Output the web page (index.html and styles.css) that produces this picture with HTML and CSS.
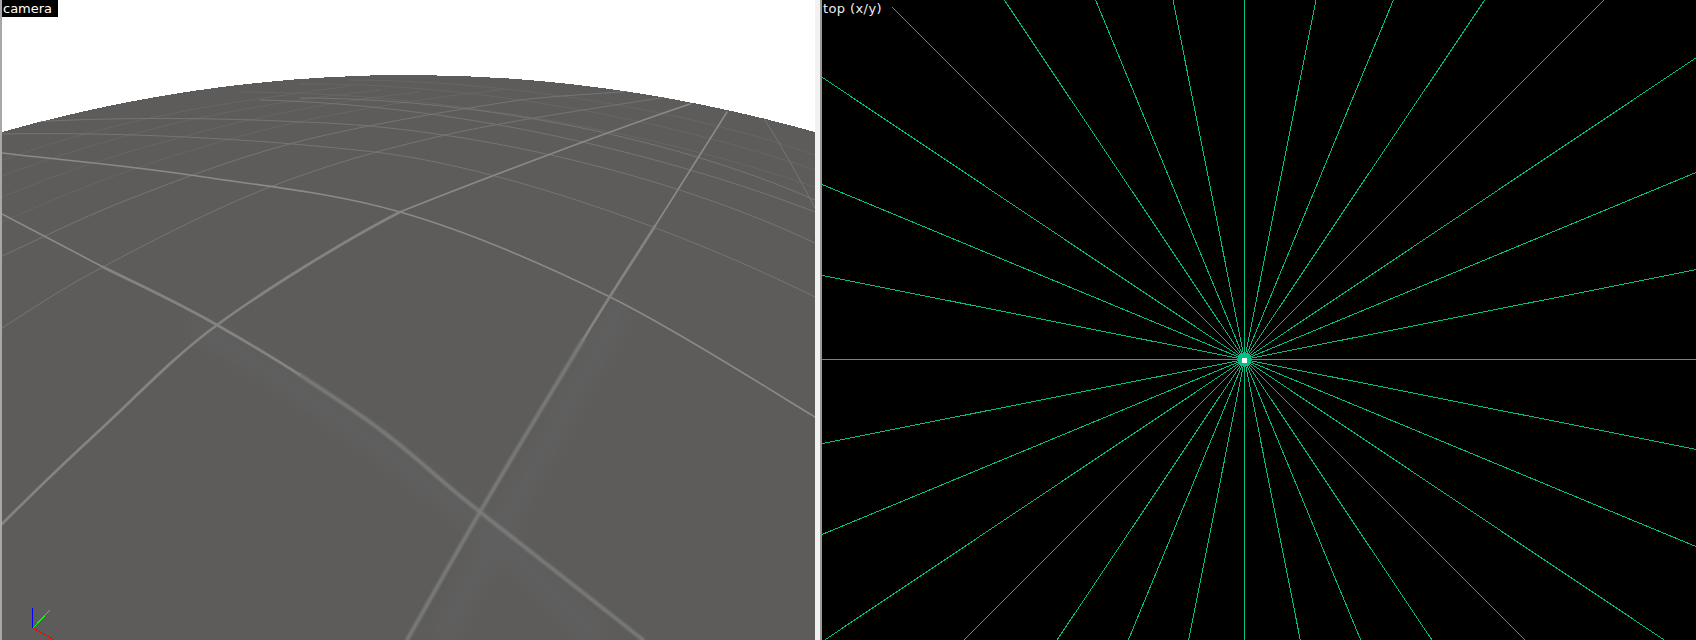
FILE: index.html
```html
<!DOCTYPE html>
<html>
<head>
<meta charset="utf-8">
<title>Viewports</title>
<link rel="stylesheet" href="styles.css">
</head>
<body>
<div class="views">
    <div class="view view-camera">
        <svg class="scene" viewBox="2 0 813 640" width="813" height="640">
            <defs>
                <clipPath id="ground-clip">
                    <path d="M2 132 Q408 18 815 132 L815 640 L2 640 Z"/>
                </clipPath>
            </defs>
            <!-- ground -->
            <path class="ground" d="M2 132 Q408 18 815 132 L815 640 L2 640 Z"/>

            <g clip-path="url(#ground-clip)">
                <!-- soft blue glow next to the near lines -->
                <g class="glow">
                    <path d="M190 325 C280 370 400 460 500 540 L600 640"/>
                    <path d="M440 640 C500 530 560 420 625 300"/>
                </g>

                <!-- far lines -->
                <g class="ln ln-faint">
                    <path d="M2 176 Q80 146 180 122 Q280 100 380 90"/>
                    <path d="M2 160 Q90 128 200 108 Q280 95 350 86"/>
                    <path d="M300 84 C470 82 670 120 815 170"/>
                    <path d="M350 80 C500 80 690 110 815 155"/>
                    <path d="M240 92 C430 92 650 130 815 187"/>
                    <path d="M2 197 Q90 160 183 137 Q290 106 420 92"/>
                    <path d="M2 222 Q110 172 233 138 Q350 106 500 90"/>
                </g>
                <g class="ln ln-thin">
                    <path d="M2 328 C19 318 58 290 103 267 C148 243 213 209 270 187 C327 165 379 150 445 135 C511 120 630 103 667 97"/>
                    <path d="M2 256 C23 247 78 219 127 200 C176 181 232 159 297 142 C362 125 467 108 520 100 C560 95 620 93 640 90"/>
                    <path d="M2 134 C120 132 250 138 375 152 C500 167 680 230 815 297"/>
                    <path d="M2 124 C100 116 230 118 300 122 C440 125 650 165 815 243"/>
                    <path d="M300 98 C460 98 660 132 815 200"/>
                    <path d="M260 100 C450 104 660 152 815 212"/>
                    <path d="M765 120 Q790 160 815 208"/>
                </g>

                <!-- near lines -->
                <g class="ln ln-mid">
                    <path d="M2 153 C33 157 124 165 190 175 C256 185 330 192 400 212 C470 232 541 263 610 297 C679 331 781 397 815 417"/>
                    <path d="M400 212 C450 192 500 173 548 155 C596 137 666 112 690 104"/>
                    <path d="M2 214 C19 223 67 248 103 267"/>
                    <path d="M727 112 C715 131 679 188 655 226"/>
                </g>
                <g class="ln ln-near">
                    <path d="M2 524 C18 508 64 463 100 430 C136 397 172 358 217 325 C262 292 340 243 400 212"/>
                    <path d="M103 267 C139 285 173 300 217 325 C245 341 272 357 300 375"/>
                    <path d="M655 226 C631 264 612 292 583 340"/>
                </g>
                <g class="ln ln-close">
                    <path d="M300 375 C323 390 345 404 367 420 C411 451 433 475 480 512 C527 549 616 618 643 640"/>
                    <path d="M583 340 C554 388 509 462 480 512 C451 562 419 619 407 640"/>
                </g>
            </g>

            <!-- axes -->
            <g class="axes">
                <line class="axis-x" x1="33" y1="628" x2="54" y2="640"/>
                <line class="axis-y" x1="33" y1="628" x2="50" y2="610"/>
                <line class="axis-z" x1="32.5" y1="628" x2="32.5" y2="608"/>
            </g>
        </svg>
        <span class="label label-camera">camera</span>
    </div>
    <div class="gutter"></div>
    <div class="view view-top">
        <svg class="rays" viewBox="822 0 874 640" width="874" height="640">
            <g transform="translate(1244.5 359.5)">
                <line x1="-1000" y1="0" x2="1000" y2="0"/>
                <line x1="-980.8" y1="-195.1" x2="980.8" y2="195.1"/>
                <line x1="-923.9" y1="-382.7" x2="923.9" y2="382.7"/>
                <line x1="-831.5" y1="-555.6" x2="831.5" y2="555.6"/>
                <line x1="-707.1" y1="-707.1" x2="707.1" y2="707.1"/>
                <line x1="-555.6" y1="-831.5" x2="555.6" y2="831.5"/>
                <line x1="-382.7" y1="-923.9" x2="382.7" y2="923.9"/>
                <line x1="-195.1" y1="-980.8" x2="195.1" y2="980.8"/>
                <line x1="0" y1="-1000" x2="0" y2="1000"/>
                <line x1="195.1" y1="-980.8" x2="-195.1" y2="980.8"/>
                <line x1="382.7" y1="-923.9" x2="-382.7" y2="923.9"/>
                <line x1="555.6" y1="-831.5" x2="-555.6" y2="831.5"/>
                <line x1="707.1" y1="-707.1" x2="-707.1" y2="707.1"/>
                <line x1="831.5" y1="-555.6" x2="-831.5" y2="555.6"/>
                <line x1="923.9" y1="-382.7" x2="-923.9" y2="382.7"/>
                <line x1="980.8" y1="-195.1" x2="-980.8" y2="195.1"/>
                <circle class="hub" cx="0" cy="0" r="7"/>
                <rect class="dot" x="-2.5" y="-1.5" width="5" height="5"/>
            </g>
        </svg>
        <span class="label label-top">top (x/y)</span>
    </div>
</div>
</body>
</html>
```

FILE: styles.css
```css
*{
    margin: 0;
    padding: 0;
    box-sizing: border-box;
}
html, body{
    width: 100%;
    height: 100%;
    overflow: hidden;
    background-color: #fff;
}
.views{
    display: flex;
    height: 640px;
}
.view{
    position: relative;
    height: 640px;
    overflow: hidden;
}
.view svg{
    display: block;
}
.view-camera{
    width: 815px;
    border-left: 2px solid #a8a8a8;
    background-color: #fff;
}
.gutter{
    width: 7px;
    background-color: #f2f2f2;
    border-right: 2px solid #999;
}
.view-top{
    width: 874px;
    background-color: #000;
}
.label{
    position: absolute;
    top: 0;
    left: 0;
    height: 17px;
    font-family: "DejaVu Sans", sans-serif;
    font-size: 13px;
    line-height: 18px;
    color: #fff;
    background-color: #000;
}
.label-camera{
    width: 56px;
    padding-left: 1px;
}
.label-top{
    width: 70px;
    height: 18px;
    padding-left: 1px;
    letter-spacing: 0.4px;
    color: #eee;
}
.ground{
    fill: #5e5c5a;
    shape-rendering: crispEdges;
}
.glow{
    fill: none;
    stroke: #64666a;
    stroke-width: 22;
    opacity: 0.4;
    filter: blur(10px);
}
.ln{
    fill: none;
    stroke-linecap: round;
    stroke-linejoin: round;
}
.ln-faint{
    stroke: #676664;
    stroke-width: 1;
}
.ln-thin{
    stroke: #767573;
    stroke-width: 1;
}
.ln-mid{
    stroke: #8a8a87;
    stroke-width: 1.6;
    filter: blur(0.3px);
}
.ln-near{
    stroke: #838480;
    stroke-width: 2.7;
    filter: blur(0.6px);
}
.ln-close{
    stroke: #7b7e79;
    stroke-width: 3.6;
    filter: blur(0.9px);
}
.axes line{
    stroke-width: 1;
    shape-rendering: crispEdges;
}
.axis-x{
    stroke: #f00;
}
.axis-y{
    stroke: #0f0;
}
.axis-z{
    stroke: #00f;
}
.rays line{
    stroke: #00c088;
    stroke-width: 1;
    shape-rendering: crispEdges;
}
.hub{
    fill: #00c088;
    shape-rendering: crispEdges;
}
.dot{
    fill: #fff;
    shape-rendering: crispEdges;
}
```
